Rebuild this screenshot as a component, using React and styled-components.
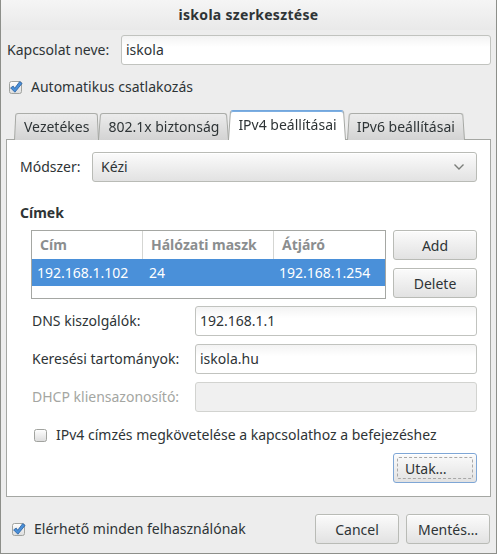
import React from 'react';
import styled, { createGlobalStyle, css } from 'styled-components';

const GlobalStyle = createGlobalStyle`
  html, body {
    margin: 0;
    padding: 0;
    background: #ededed;
  }
  body {
    font-family: 'Noto Sans', 'DejaVu Sans', sans-serif;
    font-size: 14px;
    line-height: 18px;
    color: #2e3436;
  }
  * {
    box-sizing: border-box;
  }
`;

const Window = styled.div`
  width: 497px;
  height: 554px;
  display: flex;
  flex-direction: column;
  background: #ededed;
  border: 1px solid #8d8f8a;
  border-top: none;
`;

const TitleBar = styled.div`
  height: 30px;
  flex: none;
  display: flex;
  align-items: center;
  justify-content: center;
  background: linear-gradient(to bottom, #f5f5f5, #e9e9e9);
  font-weight: bold;
  font-size: 14px;
  color: #2e3436;
  letter-spacing: 0.3px;
`;

const Body = styled.div`
  flex: 1;
  display: flex;
  flex-direction: column;
  padding: 5px 5px 0 5px;
`;

const FieldRow = styled.div`
  display: grid;
  grid-template-columns: ${p => p.$labelWidth}px 1fr;
  align-items: center;
  padding-left: ${p => p.$indent || 0}px;
`;

const Label = styled.span`
  white-space: nowrap;
  color: ${p => (p.$disabled ? '#a4a6a2' : '#2e3436')};
  font-weight: ${p => (p.$bold ? 'bold' : 'normal')};
`;

const Entry = styled.div`
  height: 30px;
  display: flex;
  align-items: center;
  padding: 0 4px;
  border: 1px solid #c1c3bf;
  border-radius: 3px;
  background: ${p =>
    p.$disabled
      ? '#f0f0f0'
      : 'linear-gradient(to bottom, #f3f3f3, #ffffff 40%)'};
  ${p =>
    p.$disabled &&
    css`
      border-color: #d2d3d0;
    `}
`;

const buttonLook = css`
  height: 30px;
  border: 1px solid #b9bbb6;
  border-radius: 3px;
  background: linear-gradient(to bottom, #fbfbfb, #e2e2e2);
  font-family: inherit;
  font-size: 14px;
  color: #2e3436;
  box-shadow: inset 0 1px 0 #ffffff;
`;

const Button = styled.button`
  ${buttonLook};
  width: 84px;
  flex: none;
  padding: 0;
  ${p =>
    p.$focused &&
    css`
      border-color: #7ea6d6;
      position: relative;
      text-align: left;
      padding-left: 11px;
      &::after {
        content: '';
        position: absolute;
        inset: 3px;
        border: 1px dashed #a8a8a8;
        border-radius: 2px;
      }
    `}
`;

const CheckRow = styled.div`
  display: flex;
  align-items: center;
  gap: 9px;
  padding-left: ${p => p.$indent || 3}px;
`;

const Checkbox = ({ checked }) => (
  <svg width="13" height="13" viewBox="0 0 13 13" style={{ flex: 'none', overflow: 'visible' }}>
    <defs>
      <linearGradient id={checked ? 'cbg1' : 'cbg0'} x1="0" y1="0" x2="0" y2="1">
        <stop offset="0" stopColor="#ffffff" />
        <stop offset="1" stopColor="#dcdcdc" />
      </linearGradient>
    </defs>
    <rect
      x="0.5"
      y="0.5"
      width="12"
      height="12"
      rx="2"
      fill={`url(#${checked ? 'cbg1' : 'cbg0'})`}
      stroke="#a1a39f"
    />
    {checked && (
      <path
        d="M1.6 6.9 L4.2 5.1 L5.7 7.3 L10.7 0.6 L13.1 2.4 L5.9 11.2 Z"
        fill="#4a90d9"
        stroke="#2a5f9e"
        strokeWidth="0.8"
        strokeLinejoin="round"
      />
    )}
  </svg>
);

const AutoRow = styled(CheckRow)`
  margin-top: 10px;
  height: 24px;
`;

const Notebook = styled.div`
  margin-top: 10px;
  display: flex;
  flex-direction: column;
`;

const TabStrip = styled.div`
  display: flex;
  align-items: flex-end;
  padding-left: 8px;
  height: 31px;
  position: relative;
  z-index: 1;
  margin-bottom: -1px;
`;

const Tab = styled.div`
  position: relative;
  height: ${p => (p.$active ? 31 : 28)}px;
  padding: 0 10px;
  display: flex;
  align-items: center;
  padding-top: ${p => (p.$active ? 0 : 1)}px;
  white-space: nowrap;
  margin-left: ${p => (p.$first ? 0 : -1)}px;
  margin-right: ${p => (p.$active ? 1 : 0)}px;
  z-index: ${p => (p.$active ? 2 : 1)};
  color: #2e3436;

  &::before {
    content: '';
    position: absolute;
    inset: 0;
    z-index: -1;
    border: 1px solid #a5a7a3;
    border-bottom: none;
    border-radius: 3px 3px 0 0;
    background: ${p =>
      p.$active ? '#ffffff' : 'linear-gradient(to bottom, #ececec, #d3d3d3)'};
    transform: perspective(60px) rotateX(4deg);
    transform-origin: bottom;
    ${p =>
      p.$active &&
      css`
        border-top: 1px solid #4a90d9;
        box-shadow: inset 0 1px 0 #7fb0e3;
      `}
  }
`;

const Panel = styled.div`
  background: #ffffff;
  border: 1px solid #a5a7a3;
  height: 358px;
  padding: 12px 13px 13px 13px;
  display: flex;
  flex-direction: column;
`;

const Combo = styled.div`
  ${buttonLook};
  display: flex;
  align-items: center;
  justify-content: space-between;
  padding: 0 11px 0 8px;
`;

const SectionTitle = styled(Label)`
  margin-top: 22px;
  font-weight: bold;
`;

const AddressArea = styled.div`
  display: flex;
  gap: 7px;
  margin-top: 8px;
  padding-left: 11px;
`;

const Tree = styled.div`
  width: 355px;
  height: 69px;
  border: 1px solid #a5a7a3;
  background: #ffffff;
  display: flex;
  flex-direction: column;
`;

const TreeRow = styled.div`
  display: grid;
  grid-template-columns: 110px 131px 1fr;
  height: ${p => (p.$header ? 28 : 27)}px;
  align-items: center;
  background: ${p => (p.$selected ? '#4a90d9' : 'transparent')};
  color: ${p => (p.$selected ? '#ffffff' : '#2e3436')};
`;

const HeaderCell = styled.div`
  height: 100%;
  display: flex;
  align-items: center;
  padding-left: 8px;
  font-weight: bold;
  color: #8b8e8f;
  border-left: ${p => (p.$sep ? '1px solid #d5d6d3' : 'none')};
`;

const Cell = styled.div`
  padding-left: ${p => p.$pad || 5}px;
  white-space: nowrap;
`;

const ButtonColumn = styled.div`
  display: flex;
  flex-direction: column;
  gap: 8px;
`;

const FormGrid = styled.div`
  display: grid;
  grid-template-columns: 163px 1fr;
  row-gap: 8px;
  align-items: center;
  margin-top: 7px;
  padding-left: 12px;
`;

const RequireRow = styled(CheckRow)`
  margin-top: 14px;
  padding-left: 14px;
`;

const RoutesRow = styled.div`
  display: flex;
  justify-content: flex-end;
  margin-top: 9px;
`;

const Footer = styled.div`
  flex: 1;
  display: flex;
  align-items: center;
  justify-content: space-between;
  padding: 8px 1px 0 3px;
`;

const FooterButtons = styled.div`
  display: flex;
  gap: 7px;
`;

const Chevron = () => (
  <svg width="12" height="8" viewBox="0 0 12 8">
    <path d="M1.5 1.5 L6 6 L10.5 1.5" fill="none" stroke="#7b7e7a" strokeWidth="1.4" />
  </svg>
);

const App = () => {
  const fields = [
    { label: 'DNS kiszolgálók:', value: '192.168.1.1' },
    { label: 'Keresési tartományok:', value: 'iskola.hu' },
    { label: 'DHCP kliensazonosító:', value: '', disabled: true },
  ];

  return (
    <>
      <GlobalStyle />
      <Window>
        <TitleBar>iskola szerkesztése</TitleBar>
        <Body>
          <FieldRow $labelWidth={114} $indent={1}>
            <Label>Kapcsolat neve:</Label>
            <Entry>iskola</Entry>
          </FieldRow>

          <AutoRow>
            <Checkbox checked />
            <Label>Automatikus csatlakozás</Label>
          </AutoRow>

          <Notebook>
            <TabStrip>
              <Tab $first>Vezetékes</Tab>
              <Tab>802.1x biztonság</Tab>
              <Tab $active>IPv4 beállításai</Tab>
              <Tab>IPv6 beállításai</Tab>
            </TabStrip>
            <Panel>
              <FieldRow $labelWidth={72}>
                <Label>Módszer:</Label>
                <Combo>
                  <span>Kézi</span>
                  <Chevron />
                </Combo>
              </FieldRow>

              <SectionTitle>Címek</SectionTitle>
              <AddressArea>
                <Tree>
                  <TreeRow $header>
                    <HeaderCell>Cím</HeaderCell>
                    <HeaderCell $sep>Hálózati maszk</HeaderCell>
                    <HeaderCell $sep>Átjáró</HeaderCell>
                  </TreeRow>
                  <TreeRow $selected>
                    <Cell>192.168.1.102</Cell>
                    <Cell $pad={7}>24</Cell>
                    <Cell $pad={6}>192.168.1.254</Cell>
                  </TreeRow>
                </Tree>
                <ButtonColumn>
                  <Button>Add</Button>
                  <Button>Delete</Button>
                </ButtonColumn>
              </AddressArea>

              <FormGrid>
                {fields.map(f => (
                  <React.Fragment key={f.label}>
                    <Label $disabled={f.disabled}>{f.label}</Label>
                    <Entry $disabled={f.disabled}>{f.value}</Entry>
                  </React.Fragment>
                ))}
              </FormGrid>

              <RequireRow>
                <Checkbox />
                <Label>IPv4 címzés megkövetelése a kapcsolathoz a befejezéshez</Label>
              </RequireRow>

              <RoutesRow>
                <Button $focused>Utak…</Button>
              </RoutesRow>
            </Panel>
          </Notebook>

          <Footer>
            <CheckRow $indent={0}>
              <Checkbox checked />
              <Label>Elérhető minden felhasználónak</Label>
            </CheckRow>
            <FooterButtons>
              <Button>Cancel</Button>
              <Button>Mentés…</Button>
            </FooterButtons>
          </Footer>
        </Body>
      </Window>
    </>
  );
};

export default App;
